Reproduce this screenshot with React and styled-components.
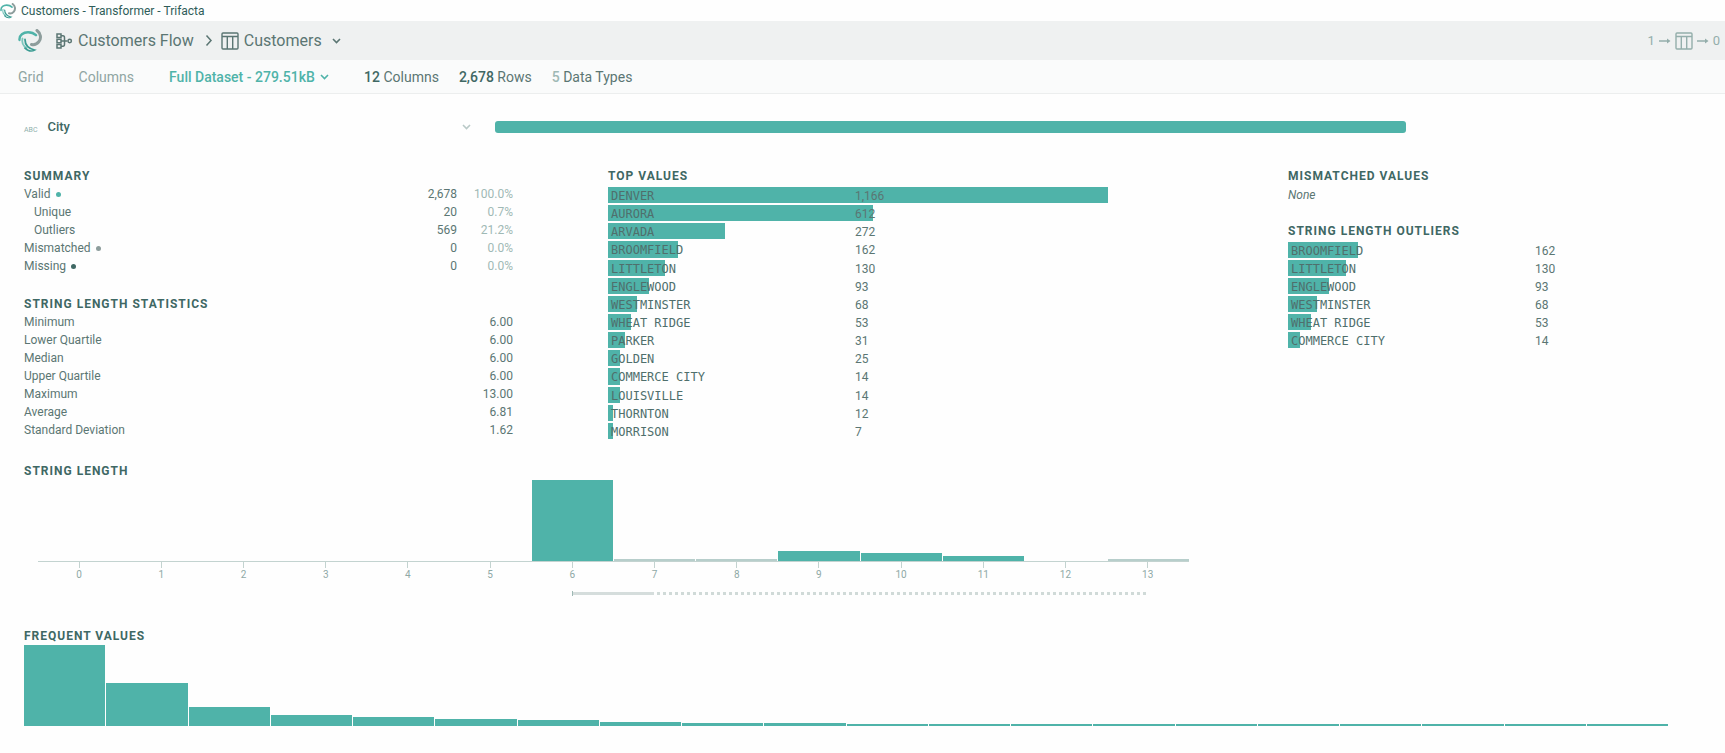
import React from "react";
import styled, { createGlobalStyle } from "styled-components";

const teal = "#4fb3a9";
const ink = "#3f6864";
const body = "#5b7673";
const faint = "#9fb9b5";
const line = "#c3d3d0";

const Global = createGlobalStyle`
  * { box-sizing: border-box; }
  body { margin: 0; background: #fefefe; color: ${body}; font: 12px/18px Roboto, sans-serif; }
  button, select { font: inherit; color: inherit; background: none; border: 0; padding: 0; margin: 0; cursor: pointer; }
  a { color: inherit; text-decoration: none; }
  h1, h2, ul, ol { margin: 0; padding: 0; list-style: none; }
`;

const TitleBar = styled.div`
  display: flex; align-items: center; gap: 5px; height: 21px;
  color: #2f5d59;
`;
const Header = styled.header`
  display: flex; align-items: center; height: 39px; padding: 0 5px 0 18px;
  background: #eff1f1; font-size: 16px;
`;
const HomeLink = styled.a`display: flex; margin-right: 14px;`;
const Crumb = styled.a`display: flex; align-items: center; gap: 5px;`;
const Separator = styled.span`display: flex; padding: 0 8px 0 11px;`;
const IconButton = styled.button`display: flex; color: ${(p) => p.$color || body}; margin-left: ${(p) => p.$left || 0}px;`;
const Links = styled.div`
  display: flex; align-items: center; gap: 4px; margin-left: auto;
  color: #94aeab; font-size: 13px;
`;
const Toolbar = styled.nav`
  display: flex; align-items: center; height: 34px; padding: 0 18px;
  background: #fafbfb; border-bottom: 1px solid #eceeee; font-size: 14px;
`;
const Tab = styled.button`color: #8fa5a2; margin-right: 35px;`;
const DatasetPicker = styled.label`
  display: flex; align-items: center; gap: 5px; margin-right: 35px; color: ${teal}; font-weight: 500;
  select { appearance: none; }
`;
const Metric = styled.span`
  margin-right: 20px; color: ${body};
  b { font-weight: 500; color: ${(p) => (p.$pale ? faint : ink)}; }
`;

const Main = styled.main`padding: 24px 24px 26px;`;
const ColumnHead = styled.div`
  display: grid; grid-template-columns: 471fr 911fr 295fr; align-items: center; height: 18px;
`;
const ColumnName = styled.div`
  display: flex; align-items: center; padding-right: 24px;
  h1 { font-size: 13px; line-height: 18px; font-weight: 500; color: ${ink}; margin-left: 10px; }
  button { margin-left: auto; }
`;
const TypeTag = styled.span`font-size: 7px; line-height: 10px; padding-top: 6px; color: #8fb0ac;`;
const QualityBar = styled.div`height: 12px; border-radius: 3px; background: ${teal};`;

const Panels = styled.div`display: grid; grid-template-columns: 584fr 680fr 413fr; margin-top: 31px;`;
const Panel = styled.div`display: flex; flex-direction: column; padding-right: ${(p) => p.$pad || 0}px;`;
const Heading = styled.h2`
  font-size: 12px; line-height: 18px; font-weight: 700; letter-spacing: 1px; color: ${ink};
  margin-top: ${(p) => p.$top || 0}px;
`;
const Stats = styled.table`
  width: 100%; border-collapse: collapse; margin: 0 0 2px;
  th, td { padding: 0; height: 18px; }
  th { font-weight: 400; text-align: left; }
  td { text-align: right; width: 56px; }
`;
const StatName = styled.th`&& { padding-left: ${(p) => (p.$nested ? 10 : 0)}px; }`;
const Percent = styled.td`color: ${faint};`;
const Dot = styled.i`
  display: inline-block; width: 5px; height: 5px; border-radius: 50%;
  margin: 0 0 1px 5px; background: ${(p) => p.$color};
`;
const None = styled.em`margin-top: 1px;`;

const BarList = styled.ol`
  display: grid; grid-auto-rows: minmax(18px, 1fr); margin-top: 2px; flex: ${(p) => (p.$fill ? 1 : "none")};
`;
const BarRow = styled.li`
  display: grid; grid-template-columns: 247px 1fr; align-items: center;
`;
const Bar = styled.div`
  grid-area: 1 / 1 / 2 / 3; align-self: stretch; max-width: 100%; margin-bottom: 2px; background: ${teal};
`;
const City = styled.span`
  grid-area: 1 / 1; z-index: 1; padding-left: 3px;
  font: 12px/18px "DejaVu Sans Mono", monospace; color: #4f6f6c;
`;
const Count = styled.span`grid-area: 1 / 2; z-index: 1;`;

const ChartArea = styled.div`margin-right: 33px;`;
const LengthChart = styled.div`width: 70%; margin-left: 14px;`;
const Bins = styled.div`
  display: grid; grid-template-columns: repeat(${(p) => p.$count}, 1fr);
  column-gap: 1px; align-items: end; box-sizing: content-box; height: 81px;
  border-bottom: ${(p) => (p.$axis ? `1px solid ${line}` : 0)};
`;
const Bin = styled.div`background: ${(p) => (p.$pale ? "#b7cecb" : teal)};`;
const Ticks = styled.div`
  display: grid; grid-template-columns: repeat(14, 1fr); text-align: center;
  font-size: 10px; line-height: 14px; color: #8fa9a6;
`;
const Tick = styled.span`
  display: flex; flex-direction: column; align-items: center;
  &::before { content: ""; width: 1px; height: 6px; background: ${line}; }
`;
const Spread = styled.div`
  display: grid; grid-template-columns: repeat(28, 1fr); align-items: center; height: 6px; margin-top: 8px;
`;
const Quartiles = styled.div`
  grid-column: 14 / 16; height: 5px; border-left: 1px solid ${faint};
  display: flex; align-items: center;
  &::after { content: ""; flex: 1; height: 3px; background: #d5dddc; }
`;
const Whisker = styled.div`
  grid-column: 16 / 28; height: 3px;
  background: repeating-linear-gradient(90deg, transparent 0 3px, #d0dad8 3px 6px);
`;

const Logo = ({ size }) => (
  <svg width={size} height={size} viewBox="0 0 24 24" fill="none" strokeLinecap="round" aria-hidden="true">
    <path d="M1.500 11C1 6 5.500 3.200 10 3.200c3.500 0 6 1 8 3" stroke={teal} strokeWidth="2.400" />
    <path d="M19 1.500c4 3 4.500 8 1.800 11.300-1.800 2.200-4.800 3.200-7.300 2.700" stroke="#8d9d9c" strokeWidth="3" />
    <path d="M4.500 9.500c-1 4 1 7.500 4 9.500" stroke="#7cc6bd" strokeWidth="1.800" />
    <path d="M7 10.500c0 5 3.500 9 9.500 10.500-3 1.800-7 .8-9.500-1.800" stroke="#3a9c93" strokeWidth="1.800" />
  </svg>
);
const FlowIcon = () => (
  <svg width="17" height="16" viewBox="0 0 17 16" fill="none" stroke={body} strokeWidth="1.500" aria-hidden="true">
    <rect x="1" y="1" width="4" height="3.500" />
    <rect x="1" y="6.300" width="4" height="3.500" />
    <rect x="1" y="11.500" width="4" height="3.500" />
    <path d="M5 2.800h2q1.500 0 1.500 2v6.500q0 2-1.500 2H5M5 8h6.500" />
    <circle cx="13.700" cy="8" r="1.700" />
  </svg>
);
const TableIcon = ({ color = body }) => (
  <svg width="18" height="18" viewBox="0 0 18 18" fill="none" stroke={color} strokeWidth="1.400" aria-hidden="true">
    <rect x="1" y="1" width="16" height="16" rx="1" />
    <path d="M1 4.500h16M6.300 4.500V17M11.700 4.500V17" />
  </svg>
);
const Caret = () => (
  <svg width="9" height="6" viewBox="0 0 9 6" fill="none" stroke="currentColor" strokeWidth="1.600" aria-hidden="true">
    <path d="M1 1l3.500 3.500L8 1" />
  </svg>
);
const Chevron = () => (
  <svg width="8" height="13" viewBox="0 0 8 13" fill="none" stroke={body} strokeWidth="1.500" aria-hidden="true">
    <path d="M1.500 1.500l4.500 5-4.500 5" />
  </svg>
);
const Arrow = () => (
  <svg width="12" height="8" viewBox="0 0 12 8" fill="none" stroke="#94aeab" strokeWidth="1.500" aria-hidden="true">
    <path d="M0 4h9" />
    <path d="M8 1.500L11.500 4 8 6.500z" fill="#94aeab" stroke="none" />
  </svg>
);

const summary = [
  { name: "Valid", dot: teal, count: "2,678", pct: "100.0%" },
  { name: "Unique", nested: true, count: "20", pct: "0.7%" },
  { name: "Outliers", nested: true, count: "569", pct: "21.2%" },
  { name: "Mismatched", dot: "#8d9d9c", count: "0", pct: "0.0%" },
  { name: "Missing", dot: ink, count: "0", pct: "0.0%" },
];
const lengthStats = [
  ["Minimum", "6.00"], ["Lower Quartile", "6.00"], ["Median", "6.00"], ["Upper Quartile", "6.00"],
  ["Maximum", "13.00"], ["Average", "6.81"], ["Standard Deviation", "1.62"],
];
const topValues = [
  ["DENVER", "1,166", 500], ["AURORA", "612", 265], ["ARVADA", "272", 117], ["BROOMFIELD", "162", 70],
  ["LITTLETON", "130", 57], ["ENGLEWOOD", "93", 41], ["WESTMINSTER", "68", 29], ["WHEAT RIDGE", "53", 23],
  ["PARKER", "31", 17], ["GOLDEN", "25", 12], ["COMMERCE CITY", "14", 12], ["LOUISVILLE", "14", 12],
  ["THORNTON", "12", 5], ["MORRISON", "7", 5],
];
const outliers = [
  ["BROOMFIELD", "162", 70], ["LITTLETON", "130", 58], ["ENGLEWOOD", "93", 41],
  ["WESTMINSTER", "68", 29], ["WHEAT RIDGE", "53", 23], ["COMMERCE CITY", "14", 12],
];
const lengthBins = [0, 0, 0, 0, 0, 0, 81, 2, 2, 10, 8, 5, 0, 2];
const frequentBins = [81, 43, 19, 11, 9, 7, 6, 4, 3, 3, 2, 2, 2, 2, 2, 2, 2, 2, 2, 2];

const ValueBars = ({ rows, fill }) => (
  <BarList $fill={fill}>
    {rows.map(([city, count, width]) => (
      <BarRow key={city}>
        <Bar style={{ width }} />
        <City>{city}</City>
        <Count>{count}</Count>
      </BarRow>
    ))}
  </BarList>
);

export default function App() {
  return (
    <>
      <Global />
      <TitleBar><Logo size={16} />Customers - Transformer - Trifacta</TitleBar>
      <Header>
        <HomeLink href="#home" aria-label="Home"><Logo size={24} /></HomeLink>
        <Crumb href="#flow"><FlowIcon />Customers Flow</Crumb>
        <Separator><Chevron /></Separator>
        <Crumb href="#customers"><TableIcon />Customers</Crumb>
        <IconButton $left={10} aria-label="Switch dataset"><Caret /></IconButton>
        <Links>1 <Arrow /><TableIcon color="#94aeab" /><Arrow /> 0</Links>
      </Header>
      <Toolbar>
        <Tab>Grid</Tab>
        <Tab>Columns</Tab>
        <DatasetPicker>
          <select aria-label="Sample"><option>Full Dataset - 279.51kB</option></select>
          <Caret />
        </DatasetPicker>
        <Metric><b>12</b> Columns</Metric>
        <Metric><b>2,678</b> Rows</Metric>
        <Metric $pale><b>5</b> Data Types</Metric>
      </Toolbar>
      <Main>
        <ColumnHead>
          <ColumnName>
            <TypeTag>ABC</TypeTag>
            <h1>City</h1>
            <IconButton $color="#b9c9c7" aria-label="Column menu"><Caret /></IconButton>
          </ColumnName>
          <QualityBar />
        </ColumnHead>
        <Panels>
          <Panel $pad={95}>
            <Heading>SUMMARY</Heading>
            <Stats>
              <tbody>
                {summary.map((s) => (
                  <tr key={s.name}>
                    <StatName scope="row" $nested={s.nested}>{s.name}{s.dot && <Dot $color={s.dot} />}</StatName>
                    <td>{s.count}</td>
                    <Percent>{s.pct}</Percent>
                  </tr>
                ))}
              </tbody>
            </Stats>
            <Heading $top={18}>STRING LENGTH STATISTICS</Heading>
            <Stats>
              <tbody>
                {lengthStats.map(([name, value]) => (
                  <tr key={name}><StatName scope="row">{name}</StatName><td>{value}</td></tr>
                ))}
              </tbody>
            </Stats>
          </Panel>
          <Panel>
            <Heading>TOP VALUES</Heading>
            <ValueBars rows={topValues} fill />
          </Panel>
          <Panel>
            <Heading>MISMATCHED VALUES</Heading>
            <None>None</None>
            <Heading $top={18}>STRING LENGTH OUTLIERS</Heading>
            <ValueBars rows={outliers} />
          </Panel>
        </Panels>
        <Heading $top={21}>STRING LENGTH</Heading>
        <ChartArea>
          <LengthChart>
            <Bins $count={14} $axis>
              {lengthBins.map((h, i) => <Bin key={i} $pale={h < 3} style={{ height: h }} />)}
            </Bins>
            <Ticks>{lengthBins.map((_, i) => <Tick key={i}>{i}</Tick>)}</Ticks>
            <Spread><Quartiles /><Whisker /></Spread>
          </LengthChart>
        </ChartArea>
        <Heading $top={31}>FREQUENT VALUES</Heading>
        <ChartArea>
          <Bins $count={20}>
            {frequentBins.map((h, i) => <Bin key={i} style={{ height: h }} />)}
          </Bins>
        </ChartArea>
      </Main>
    </>
  );
}
